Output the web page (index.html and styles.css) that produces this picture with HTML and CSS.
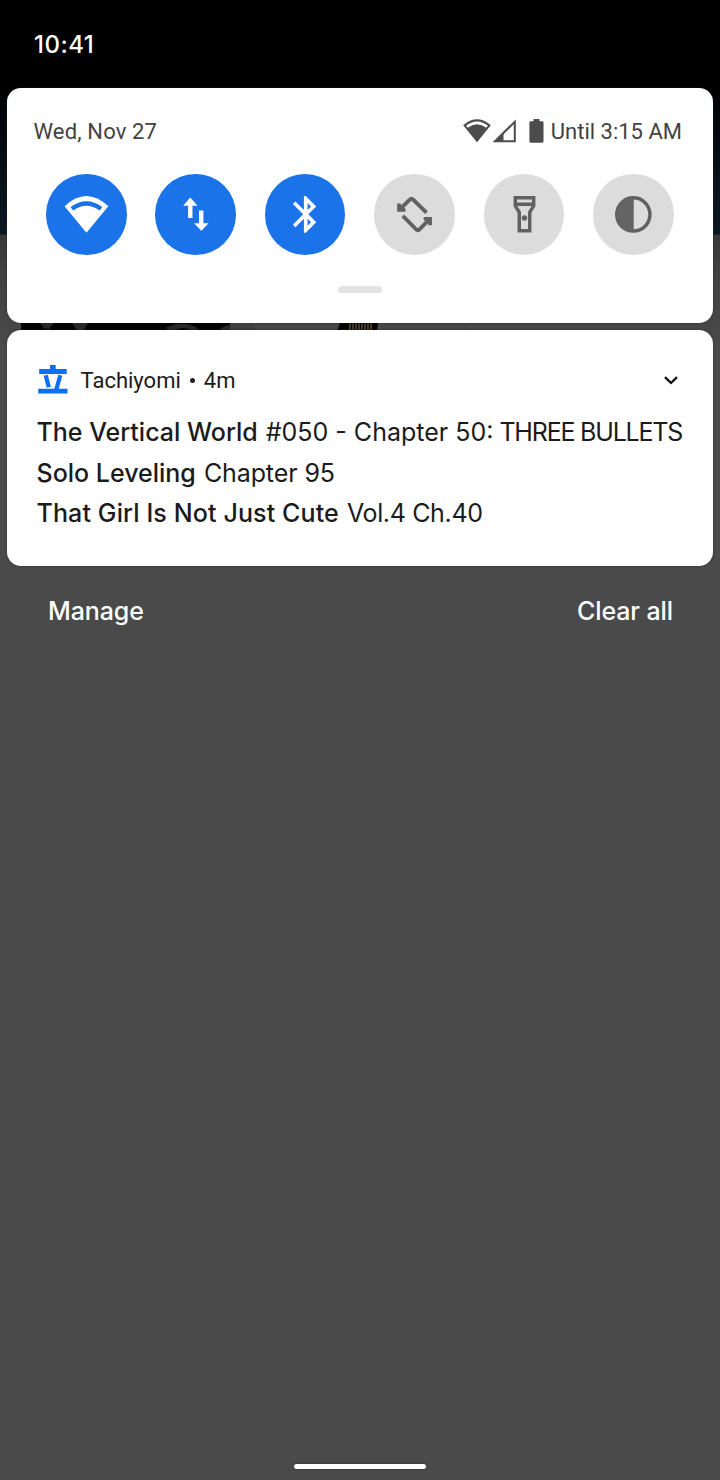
FILE: index.html
```html
<!DOCTYPE html>
<html lang="en">
<head>
<meta charset="utf-8">
<title>Notifications</title>
<link rel="stylesheet" href="styles.css">
</head>
<body>
<div class="screen">
  <header class="statusbar"><span class="clock">10:41</span></header>
  <section class="card quick">
    <div class="quick-head">
      <span class="date">Wed, Nov 27</span>
      <div class="status">
        <svg class="s-wifi" width="28" height="24" viewBox="0 0 28 24"><path d="M1.6 6.4Q14 -3.6 26.4 6.4L14 21.6Z" fill="none" stroke="#4c4c4c" stroke-width="2"/><path d="M4.6 8.8Q14 1.8 23.4 8.8L14 22Z" fill="#4c4c4c"/></svg>
        <svg class="s-cell" width="23" height="24" viewBox="0 0 23 24"><path d="M2 22.3L21.8 2.8V22.3Z" fill="none" stroke="#4c4c4c" stroke-width="2"/><path d="M1 23L10.5 13.7V23Z" fill="#4c4c4c"/></svg>
        <svg class="s-batt" width="15" height="24" viewBox="0 0 15 24"><path d="M4.5 0h6v2.2h2.7q1.3 0 1.3 1.3v18.8q0 1.4-1.3 1.4H1.7Q.4 23.700.4 22.300V3.500Q.4 2.200 1.700 2.200h2.800z" fill="#4c4c4c"/></svg>
        <span class="until">Until 3:15 AM</span>
      </div>
    </div>
    <div class="tiles">
      <div class="tile on"><svg viewBox="0 0 81 81"><path d="M18.700 32.500Q40.700 12 62.700 32.500L40.700 59Z" fill="#fff"/><path d="M26 35Q40.700 24.500 55.400 35" fill="none" stroke="#1a73e8" stroke-width="4.500"/></svg></div>
      <div class="tile on"><svg viewBox="0 0 81 81"><path d="M35.500 23.700L42.700 32H37.700V44.300H33.300V32H28.300ZM44.300 36.700H48.700V49.500H54L46.600 57L39.300 49.500H44.300Z" fill="#fff"/></svg></div>
      <div class="tile on"><svg viewBox="0 0 81 81"><path transform="translate(18.800 18.400) scale(1.850)" fill="#fff" d="M17.710 7.710L12 2h-1v7.590L6.410 5 5 6.410 10.590 12 5 17.590 6.410 19 11 14.410V22h1l5.710-5.710-4.300-4.290 4.300-4.290zM13 5.830l1.880 1.880L13 9.590V5.830zm1.880 10.460L13 18.170v-3.760l1.880 1.880z"/></svg></div>
      <div class="tile"><svg viewBox="0 0 81 81"><path d="M26.500 35.200L36 25.700Q37.700 24 39.400 25.700L52.800 38.800M29 42.200L42.300 55.600Q44 57.300 45.700 55.600L55.500 45.800" fill="none" stroke="#616161" stroke-width="3.900"/><path d="M23.300 29.700H27L27.300 32.500L31.700 35V38H23.300ZM50 43.300H58.300V51.600H54.700L54.400 49L50 46.300Z" fill="#616161"/></svg></div>
      <div class="tile"><svg viewBox="0 0 81 81"><path d="M31.500 23.800H50V32L46 38.500V57.200H35.500V38.500L31.500 32ZM31.500 30.500H50" fill="none" stroke="#616161" stroke-width="3.500"/><circle cx="40.700" cy="44.300" r="2.700" fill="#616161"/></svg></div>
      <div class="tile"><svg viewBox="0 0 81 81"><circle cx="40.600" cy="40.700" r="16.700" fill="none" stroke="#616161" stroke-width="3.500"/><path d="M41 24V57.400A16.700 16.700 0 0 1 41 24Z" fill="#646464"/></svg></div>
    </div>
    <div class="handle"></div>
  </section>
  <svg class="artwork" viewBox="0 0 720 8" width="720" height="8">
    <path fill="#020203" d="M21 0H230V8H21ZM340 0H378L377 8H337Z"/>
    <path fill="#404040" d="M230 0H255V8H230Z"/>
    <path fill="#25272a" d="M40 0H54L49 6L44 5ZM72 0H88L84 7H77ZM165 5Q184-4 199 6L192 8Q184 2 172 8ZM219 8Q222 3 230 2V8Z"/>
    <path stroke="#463b28" stroke-width="7" stroke-dasharray="2 1" d="M349 4H373"/>
    <path fill="#3e3e3e" d="M465 0h1v8h-1z"/>
  </svg>
  <section class="card note">
    <div class="note-head">
      <svg class="logo" width="30" height="29" viewBox="0 0 30 29"><path d="M12 0h5.700v4h11v5H1.200V4H12ZM.200 23.800H29.500V28.500H.200Z" fill="#0b6ff9"/><path d="M7.700 10.200L10.800 22.200M22.300 10.200L18.300 24.500" fill="none" stroke="#0b6ff9" stroke-width="4.200"/></svg>
      <span class="app">Tachiyomi</span><i class="dot"></i><span class="age">4m</span>
      <svg class="chev" width="14" height="9" viewBox="0 0 14 9"><path d="M1 1.200L7 7L13 1.200" fill="none" stroke="#111" stroke-width="2.300"/></svg>
    </div>
    <p class="line"><b>The Vertical World</b><span>#050 - Chapter 50: <span class="caps">THREE BULLETS</span></span></p>
    <p class="line"><b>Solo Leveling</b><span class="chapter">Chapter 95</span></p>
    <p class="line"><b class="long">That Girl Is Not Just Cute</b><span class="volume">Vol.4 Ch.40</span></p>
  </section>
  <div class="actions"><span class="manage">Manage</span><span>Clear all</span></div>
  <div class="home"></div>
</div>
</body>
</html>
```
FILE: styles.css
```css
* { box-sizing: border-box; }
body { margin: 0; }
svg { display: block; flex: none; }
.screen {
  width: 720px; height: 1480px; display: flex; flex-direction: column; overflow: hidden;
  background: linear-gradient(#000 0, #000 88px, #04080d 130px, #0b141d 200px, #0c1622 234px, #373737 235px, #424242 280px, #4a4a4a 350px, #4a4a4a 100%);
  font-family: Inter, "Liberation Sans", sans-serif; color: #1b1b1b; white-space: nowrap;
}
.statusbar { height: 88px; padding: 29px 0 0 34px; color: #fff; }
.clock { display: block; font-size: 24px; line-height: 32px; font-weight: 500; letter-spacing: .5px; }
.card { margin: 0 7px; background: #fff; border-radius: 14px; box-shadow: 0 0 2px #222; flex: none; }
.quick { height: 234.5px; padding-top: 29px; }
.quick-head { height: 30px; padding: 0 31px 0 26.5px; display: flex; justify-content: space-between; font: 22px/30px Roboto, sans-serif; color: #424242; }
.date { letter-spacing: .15px; }
.status { display: flex; align-items: flex-start; }
.status svg { margin-top: 1.5px; }
.s-cell { margin-left: 2px; }
.s-batt { margin-left: 12.5px; }
.until { margin-left: 7px; letter-spacing: 0; }
.tiles { display: flex; justify-content: space-between; padding: 0 39.25px 0 39px; margin-top: 27px; }
.tile { width: 80.5px; height: 80.5px; border-radius: 50%; background: #dcdcdc; }
.on { background: #1a73e8; }
.handle { width: 44px; height: 7px; border-radius: 4px; background: #e3e3e3; margin: 31.5px auto 0; }
.artwork { margin-bottom: -.5px; }
.note { height: 236px; padding: 34px 30px 0 29.5px; }
.note-head { height: 32px; display: flex; align-items: center; font: 22px/32px Roboto, sans-serif; margin-bottom: 16px; padding-left: 1.5px; }
.logo { margin-top: -2px; }
.app, .age { position: relative; top: 1px; }
.app { margin-left: 12.5px; }
.dot { width: 5px; height: 5px; border-radius: 50%; background: #222; margin: 0 9px 0 9px; }
.chev { margin-left: auto; margin-right: 5.5px; }
.line { margin: 0; height: 40.5px; line-height: 40px; font-size: 25px; display: flex; gap: 8px; }
.line b { font-weight: 500; }
.caps { letter-spacing: -1.2px; margin-left: -1px; }
.line .long { letter-spacing: .12px; }
.chapter { letter-spacing: -.1px; }
.volume { letter-spacing: -.35px; }
.actions { display: flex; justify-content: space-between; padding: 25px 47px 0 48px; font-size: 25px; line-height: 40px; font-weight: 500; letter-spacing: -.1px; color: #fff; }
.home { width: 132px; height: 5px; border-radius: 3px; background: #fff; box-shadow: 0 0 2px #222; margin: auto auto 11px; }
```
